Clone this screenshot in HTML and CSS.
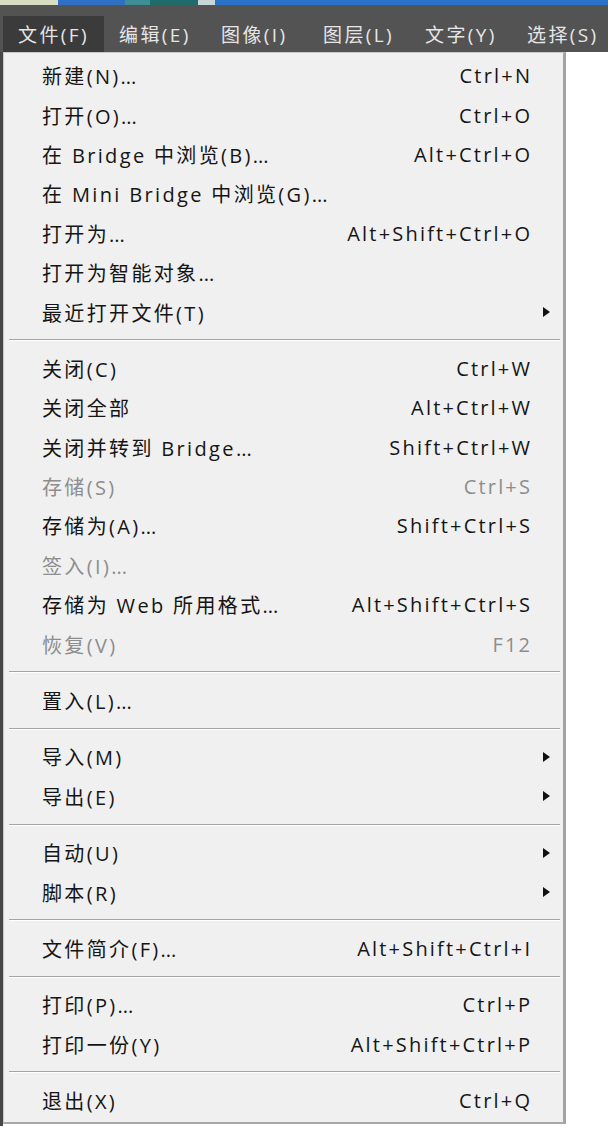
FILE: index.html
```html
<!DOCTYPE html>
<html lang="zh-CN">
<head>
<meta charset="utf-8">
<title>文件菜单</title>
<link rel="stylesheet" href="styles.css">
</head>
<body>
<div class="topstrip"></div>
<div class="menubar">
  <div class="mb-item active">文件(F)</div>
  <div class="mb-item">编辑(E)</div>
  <div class="mb-item">图像(I)</div>
  <div class="mb-item">图层(L)</div>
  <div class="mb-item">文字(Y)</div>
  <div class="mb-item">选择(S)</div>
</div>
<div class="stage">
  <div class="menu">
    <div class="row"><span class="label">新建(N)<b class="dots">...</b></span><span class="key">Ctrl+N</span><span class="sub"></span></div>
    <div class="row"><span class="label">打开(O)<b class="dots">...</b></span><span class="key">Ctrl+O</span><span class="sub"></span></div>
    <div class="row"><span class="label">在 Bridge 中浏览(B)<b class="dots">...</b></span><span class="key">Alt+Ctrl+O</span><span class="sub"></span></div>
    <div class="row"><span class="label">在 Mini Bridge 中浏览(G)<b class="dots">...</b></span><span class="key"></span><span class="sub"></span></div>
    <div class="row"><span class="label">打开为<b class="dots">...</b></span><span class="key">Alt+Shift+Ctrl+O</span><span class="sub"></span></div>
    <div class="row"><span class="label">打开为智能对象<b class="dots">...</b></span><span class="key"></span><span class="sub"></span></div>
    <div class="row"><span class="label">最近打开文件(T)</span><span class="key"></span><span class="sub"><i class="arrow"></i></span></div>
    <div class="sep"></div>
    <div class="row"><span class="label">关闭(C)</span><span class="key">Ctrl+W</span><span class="sub"></span></div>
    <div class="row"><span class="label">关闭全部</span><span class="key">Alt+Ctrl+W</span><span class="sub"></span></div>
    <div class="row"><span class="label">关闭并转到 Bridge<b class="dots">...</b></span><span class="key">Shift+Ctrl+W</span><span class="sub"></span></div>
    <div class="row disabled"><span class="label">存储(S)</span><span class="key">Ctrl+S</span><span class="sub"></span></div>
    <div class="row"><span class="label">存储为(A)<b class="dots">...</b></span><span class="key">Shift+Ctrl+S</span><span class="sub"></span></div>
    <div class="row disabled"><span class="label">签入(I)<b class="dots">...</b></span><span class="key"></span><span class="sub"></span></div>
    <div class="row"><span class="label">存储为 Web 所用格式<b class="dots">...</b></span><span class="key">Alt+Shift+Ctrl+S</span><span class="sub"></span></div>
    <div class="row disabled"><span class="label">恢复(V)</span><span class="key">F12</span><span class="sub"></span></div>
    <div class="sep"></div>
    <div class="row"><span class="label">置入(L)<b class="dots">...</b></span><span class="key"></span><span class="sub"></span></div>
    <div class="sep"></div>
    <div class="row"><span class="label">导入(M)</span><span class="key"></span><span class="sub"><i class="arrow"></i></span></div>
    <div class="row"><span class="label">导出(E)</span><span class="key"></span><span class="sub"><i class="arrow"></i></span></div>
    <div class="sep"></div>
    <div class="row"><span class="label">自动(U)</span><span class="key"></span><span class="sub"><i class="arrow"></i></span></div>
    <div class="row"><span class="label">脚本(R)</span><span class="key"></span><span class="sub"><i class="arrow"></i></span></div>
    <div class="sep"></div>
    <div class="row"><span class="label">文件简介(F)<b class="dots">...</b></span><span class="key">Alt+Shift+Ctrl+I</span><span class="sub"></span></div>
    <div class="sep"></div>
    <div class="row"><span class="label">打印(P)<b class="dots">...</b></span><span class="key">Ctrl+P</span><span class="sub"></span></div>
    <div class="row"><span class="label">打印一份(Y)</span><span class="key">Alt+Shift+Ctrl+P</span><span class="sub"></span></div>
    <div class="sep"></div>
    <div class="row"><span class="label">退出(X)</span><span class="key">Ctrl+Q</span><span class="sub"></span></div>
  </div>
</div>
</body>
</html>
```

FILE: styles.css
```css
html, body {
  margin: 0;
  padding: 0;
  background: #ffffff;
}

body {
  width: 608px;
  height: 1126px;
  overflow: hidden;
  font-family: "Open Sans", "Noto Sans CJK SC", sans-serif;
}

.topstrip {
  height: 5px;
  background: linear-gradient(to right,
    #d8dcc0 0, #d8dcc0 58px,
    #2f6fc4 58px, #2f6fc4 125px,
    #3c8f94 125px, #3c8f94 150px,
    #1f6b6a 150px, #1f6b6a 198px,
    #c9d6d8 198px, #c9d6d8 215px,
    #2a72c8 215px, #2a72c8 100%);
}

.menubar {
  height: 47px;
  background: #535353;
  display: flex;
  align-items: flex-end;
  padding-left: 3px;
}

.mb-item {
  height: 36px;
  box-sizing: border-box;
  padding: 0 0 0 15px;
  width: 102px;
  display: flex;
  align-items: center;
  color: #e6e6e6;
  font-size: 19px;
  letter-spacing: 2.4px;
  white-space: nowrap;
  flex: none;
}

.mb-item.active {
  background: #3b3b3b;
  width: 101px;
}

.stage {
  background: linear-gradient(to right, #464646 0, #464646 3px, #ffffff 3px);
  height: 1074px;
}

.menu {
  margin-left: 3px;
  width: 563px;
  box-sizing: border-box;
  background: #f0f0f0;
  border: 1px solid #c8c8c8;
  border-right: 3px solid #a3a3a3;
  border-bottom: 2px solid #a8a8a8;
  padding: 3px 0 2px;
  color: #151515;
  font-size: 20px;
}

.row {
  height: 39.4px;
  display: grid;
  grid-template-columns: 1fr auto 22px;
  align-items: center;
  padding: 0 11px 0 38px;
  white-space: nowrap;
}

.row.disabled {
  color: #8d8d8d;
}

.label {
  letter-spacing: 2.35px;
}

.dots {
  font-weight: normal;
  letter-spacing: 0;
}

.key {
  text-align: right;
  letter-spacing: 2.2px;
  margin-right: -2.2px;
}

.sub {
  display: flex;
  justify-content: flex-end;
  padding-right: 2px;
}

.arrow {
  display: block;
  width: 0;
  height: 0;
  border-top: 5.5px solid transparent;
  border-bottom: 5.5px solid transparent;
  border-left: 7px solid #111111;
}

.sep {
  height: 17px;
  display: flex;
  align-items: center;
  padding: 0 3px 0 5px;
}

.sep::before {
  content: "";
  display: block;
  flex: 1;
  height: 1px;
  background: #a4a4a4;
  border-bottom: 1px solid #ffffff;
}
```
